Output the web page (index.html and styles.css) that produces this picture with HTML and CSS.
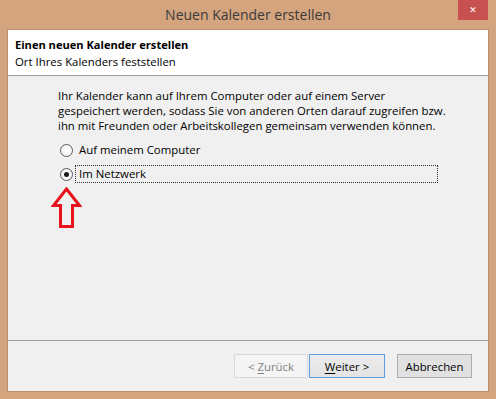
FILE: index.html
```html
<!DOCTYPE html>
<html lang="de">
<head>
    <meta charset="UTF-8">
    <title>Neuen Kalender erstellen</title>
    <link rel="stylesheet" href="styles.css">
</head>
<body>
    <div class="window">
        <div class="titlebar">
            <span class="title">Neuen Kalender erstellen</span>
            <span class="close">&#x2715;</span>
        </div>
        <div class="client">
            <div class="header">
                <div class="header-title">Einen neuen Kalender erstellen</div>
                <div class="header-sub">Ort Ihres Kalenders feststellen</div>
            </div>
            <div class="content">
                <p class="intro">Ihr Kalender kann auf Ihrem Computer oder auf einem Server<br>gespeichert werden, sodass Sie von anderen Orten darauf zugreifen bzw.<br>ihn mit Freunden oder Arbeitskollegen gemeinsam verwenden können.</p>
                <div class="option">
                    <span class="radio"></span>
                    <span class="label">Auf meinem Computer</span>
                </div>
                <div class="option selected">
                    <span class="radio"></span>
                    <span class="label">Im Netzwerk</span>
                </div>
                <svg class="arrow" width="31" height="42" viewBox="0 0 31 42">
                    <path d="M15.5 2 L28.5 18.5 L21.5 18.5 L21.5 39.5 L9.5 39.5 L9.5 18.5 L2.5 18.5 Z" fill="none" stroke="#e8121c" stroke-width="3" stroke-linejoin="miter"/>
                </svg>
            </div>
            <div class="footer">
                <button class="btn btn-back" disabled>&lt; <u>Z</u>urück</button>
                <button class="btn btn-next"><u>W</u>eiter &gt;</button>
                <button class="btn btn-cancel">Abbrechen</button>
            </div>
        </div>
    </div>
</body>
</html>
```

FILE: styles.css
```css
:root {
    --frame-color: #d4a47f;
    --face-color: #f0f0f0;
    --line-color: #a0a0a0;
}

html, body {
    margin: 0;
    padding: 0;
}

body {
    width: 496px;
    height: 399px;
    background-color: var(--frame-color);
    font-family: 'Open Sans', 'Liberation Sans', sans-serif;
    font-size: 11.4px;
    color: #000;
    overflow: hidden;
}

.window {
    display: flex;
    flex-direction: column;
    height: 399px;
    padding: 0 8px 8px;
    box-sizing: border-box;
}

.titlebar {
    position: relative;
    height: 30px;
    margin: 0 -8px;
    display: flex;
    align-items: center;
    justify-content: center;
}

.title {
    font-size: 14px;
    color: #3a3a3a;
    margin-top: -1px;
}

.close {
    position: absolute;
    top: 0;
    right: 8px;
    width: 30px;
    height: 20px;
    background-color: #c75050;
    color: #fff;
    font-family: 'DejaVu Sans', sans-serif;
    font-size: 9px;
    font-weight: bold;
    display: flex;
    align-items: center;
    justify-content: center;
}

.client {
    flex: 1;
    display: flex;
    flex-direction: column;
    background-color: var(--face-color);
    box-shadow: 0 0 0 1px rgba(120, 80, 50, 0.25);
}

.header {
    height: 46px;
    background-color: #fff;
    border-bottom: 1px solid var(--line-color);
    padding: 6px 7px 0;
    box-sizing: border-box;
    line-height: 17px;
}

.header-title {
    font-weight: bold;
    font-size: 11.1px;
}

.content {
    flex: 1;
    padding: 12px 0 0 50px;
    border-bottom: 1px solid var(--line-color);
}

.intro {
    margin: 0 0 8px;
    line-height: 15px;
}

.option {
    display: flex;
    align-items: center;
    height: 18px;
    margin: 0 0 6px 2px;
}

.radio {
    width: 13px;
    height: 13px;
    box-sizing: border-box;
    border: 1px solid #5a5a5a;
    border-radius: 50%;
    background: radial-gradient(circle, #fff 0%, #f2f2f2 100%);
    display: flex;
    align-items: center;
    justify-content: center;
    margin-right: 2px;
}

.selected .radio::after {
    content: '';
    width: 5px;
    height: 5px;
    border-radius: 50%;
    background-color: #1a1a1a;
}

.label {
    box-sizing: border-box;
    height: 18px;
    line-height: 16px;
    padding: 0 3px;
    border: 1px solid transparent;
}

.selected .label {
    width: 363px;
    border: 1px dotted #333;
}

.arrow {
    display: block;
    margin: -2px 0 0 -7px;
}

.footer {
    height: 50px;
    display: flex;
    justify-content: flex-end;
    align-items: flex-start;
    padding: 13px 16px 0 0;
    box-sizing: border-box;
}

.btn {
    height: 24px;
    width: 75px;
    font-family: inherit;
    font-size: 11.4px;
    color: #000;
    background-color: #e1e1e1;
    border: 1px solid #adadad;
    border-radius: 0;
    padding: 0;
    margin: 0;
}

.btn u {
    text-underline-offset: 2px;
}

.btn-back {
    width: 74px;
    background-color: #f4f4f4;
    border-color: #d9d9d9;
    color: #838383;
    margin-right: 1px;
}

.btn-next {
    width: 76px;
    background: linear-gradient(#ececec, #e3e3e3);
    border-color: #5c9fe0;
    margin-right: 12px;
}
```
